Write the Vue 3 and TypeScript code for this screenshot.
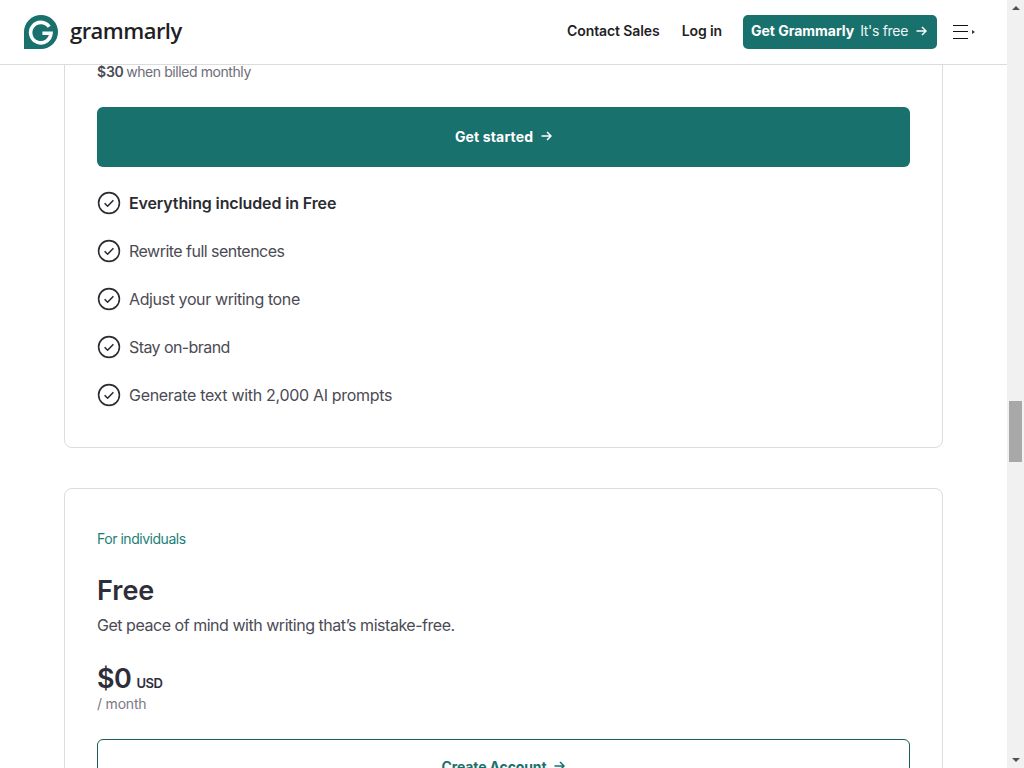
<script setup lang="ts">
const features: { text: string; strong?: boolean; spacing: number }[] = [
  { text: 'Everything included in Free', strong: true, spacing: -0.13 },
  { text: 'Rewrite full sentences', spacing: -0.52 },
  { text: 'Adjust your writing tone', spacing: -0.39 },
  { text: 'Stay on-brand', spacing: -0.58 },
  { text: 'Generate text with 2,000 AI prompts', spacing: -0.31 },
]
</script>

<template>
  <div class="viewport">
    <div class="page">
      <header class="header">
        <div class="brand">
          <svg class="logo" width="34" height="34" viewBox="0 0 34 34">
            <path d="M17 0a17 17 0 0 1 0 34H0V17A17 17 0 0 1 17 0z" fill="#19716e" />
            <path d="M25.2 11.8A10.2 10.2 0 1 0 27 18.2H18.4" fill="none" stroke="#fff" stroke-width="3.6" />
          </svg>
          <span class="wordmark">grammarly</span>
        </div>
        <nav class="nav">
          <a class="link contact">Contact Sales</a>
          <a class="link login">Log in</a>
          <a class="cta">
            <b>Get Grammarly</b>
            <span class="free">It's free</span>
            <svg class="arrow" width="11" height="10" viewBox="0 0 11 10"><path d="M0.5 5H10M6 1l4 4-4 4" fill="none" stroke="currentColor" stroke-width="1.5" /></svg>
          </a>
          <span class="burger">
            <span class="lines"><i></i><i></i><i></i></span>
            <span class="caret"></span>
          </span>
        </nav>
      </header>

      <main class="body">
        <section class="card first">
          <p class="billed"><b>$30</b> when billed monthly</p>
          <a class="btn solid">
            Get started
            <svg width="11" height="10" viewBox="0 0 11 10"><path d="M0.5 5H10M6 1l4 4-4 4" fill="none" stroke="currentColor" stroke-width="1.5" /></svg>
          </a>
          <ul class="features">
            <li v-for="f in features" :key="f.text" :class="{ strong: f.strong }">
              <svg width="24" height="24" viewBox="0 0 24 24">
                <circle cx="12" cy="12" r="10.4" fill="none" stroke="#2b2b33" stroke-width="1.6" />
                <path d="M7.6 12.2l3 3 5.8-6" fill="none" stroke="#2b2b33" stroke-width="1.6" />
              </svg>
              <span :style="{ letterSpacing: f.spacing + 'px' }">{{ f.text }}</span>
            </li>
          </ul>
        </section>

        <section class="card second">
          <p class="eyebrow">For individuals</p>
          <h2 class="plan">Free</h2>
          <p class="desc">Get peace of mind with writing that’s mistake-free.</p>
          <p class="price"><span class="amount">$0</span> <span class="usd">USD</span></p>
          <p class="per">/ month</p>
          <a class="btn outline">
            Create Account
            <svg width="11" height="10" viewBox="0 0 11 10"><path d="M0.5 5H10M6 1l4 4-4 4" fill="none" stroke="currentColor" stroke-width="1.5" /></svg>
          </a>
        </section>
      </main>
    </div>

    <aside class="scrollbar">
      <span class="up"></span>
      <span class="track"><span class="thumb"></span></span>
      <span class="down"></span>
    </aside>
  </div>
</template>

<style scoped>
.viewport {
  display: flex;
  width: 1024px;
  height: 768px;
  overflow: hidden;
  background: #fff;
  font-family: Inter, "Liberation Sans", sans-serif;
  color: #2b2b33;
}
.page {
  flex: 1;
  min-width: 0;
  display: flex;
  flex-direction: column;
}
.header {
  position: relative;
  z-index: 2;
  flex: none;
  height: 65px;
  box-sizing: border-box;
  border-bottom: 1px solid #dcdcdc;
  background: #fff;
  display: flex;
  align-items: center;
  justify-content: space-between;
  padding: 0 32px 0 24px;
}
.brand {
  display: flex;
  align-items: center;
  gap: 12px;
  margin-top: -1px;
}
.logo {
  display: block;
}
.wordmark {
  font-family: "Open Sans", sans-serif;
  font-size: 22px;
  font-weight: 600;
  letter-spacing: -0.55px;
  color: #1f1f26;
  line-height: 34px;
  margin-top: -3px;
}
.nav {
  display: flex;
  align-items: center;
  margin-top: -1px;
}
.link {
  font-size: 14px;
  font-weight: 600;
  letter-spacing: -0.1px;
  color: #1f1f26;
  margin-top: -2px;
}
.contact {
  margin-right: 22px;
}
.login {
  margin-right: 21px;
}
.cta {
  display: flex;
  align-items: center;
  box-sizing: border-box;
  width: 194px;
  height: 34px;
  padding: 0 9px 2px 8px;
  background: #19716e;
  border-radius: 5px;
  color: #fff;
  font-size: 14px;
  letter-spacing: -0.1px;
  white-space: nowrap;
}
.cta b {
  font-weight: 700;
  letter-spacing: -0.02px;
}
.free {
  margin-left: 6px;
  font-weight: 400;
  letter-spacing: -0.3px;
  color: #eef6f5;
}
.arrow {
  margin-left: 8px;
}
.burger {
  display: flex;
  align-items: center;
  margin-left: 16px;
}
.lines {
  display: flex;
  flex-direction: column;
  gap: 5.5px;
  width: 15px;
}
.lines i {
  display: block;
  height: 1px;
  background: #111;
}
.caret {
  margin-left: 4px;
  width: 0;
  height: 0;
  border-left: 3px solid #333;
  border-top: 2.5px solid transparent;
  border-bottom: 2.5px solid transparent;
}
.body {
  flex: 1;
  min-height: 0;
  overflow: hidden;
  padding: 0 64px;
}
.card {
  width: 879px;
  box-sizing: border-box;
  border: 1px solid #dcdcdc;
  border-radius: 8px;
  padding: 0 32px;
}
.first {
  margin-top: -12px;
  height: 395px;
  padding-top: 11px;
}
.second {
  margin-top: 40px;
  height: 400px;
  padding-top: 41px;
}
p, h2, ul {
  margin: 0;
  padding: 0;
}
.billed {
  font-size: 14px;
  line-height: 14px;
  letter-spacing: -0.42px;
  color: #6d6d78;
}
.billed b {
  font-weight: 600;
  letter-spacing: -0.2px;
  margin-right: -1px;
  color: #4b4b55;
}
.btn {
  display: flex;
  align-items: center;
  justify-content: center;
  gap: 8px;
  box-sizing: border-box;
  border-radius: 6px;
  font-size: 14px;
  font-weight: 700;
  letter-spacing: 0.15px;
}
.solid {
  height: 60px;
  margin-top: 28px;
  padding-bottom: 2px;
  background: #19716e;
  color: #fff;
}
.outline {
  height: 56px;
  margin-top: 26px;
  padding-bottom: 2px;
  border: 1px solid #1a5e5c;
  color: #19716e;
  letter-spacing: -0.13px;
}
.features {
  list-style: none;
  margin-top: 12px;
}
.features li {
  display: flex;
  align-items: center;
  gap: 8px;
  height: 48px;
  font-size: 16px;
  color: #4b4b55;
}
.features svg {
  flex: none;
}
.features .strong {
  font-weight: 600;
  color: #2b2b33;
}
.eyebrow {
  font-size: 14px;
  line-height: 18px;
  letter-spacing: -0.47px;
  color: #1a7f78;
}
.plan {
  margin-top: 26px;
  font-size: 27px;
  line-height: 34px;
  font-weight: 600;
  color: #2e2e3a;
}
.desc {
  margin-top: 6px;
  font-size: 16px;
  line-height: 22px;
  letter-spacing: -0.47px;
  color: #4b4b55;
}
.price {
  margin-top: 31px;
  display: flex;
  align-items: baseline;
  gap: 5px;
  line-height: 24px;
  color: #2e2e3a;
}
.amount {
  font-size: 27px;
  font-weight: 600;
  letter-spacing: -0.5px;
}
.usd {
  font-size: 13px;
  font-weight: 600;
  letter-spacing: -0.5px;
}
.per {
  font-size: 14px;
  line-height: 18px;
  letter-spacing: -0.2px;
  color: #7a7a84;
}
.scrollbar {
  flex: none;
  width: 17px;
  height: 768px;
  background: #f1f1f1;
  display: flex;
  flex-direction: column;
  align-items: center;
}
.up, .down {
  flex: none;
  width: 0;
  height: 0;
  border-left: 4px solid transparent;
  border-right: 4px solid transparent;
}
.up {
  margin-top: 6px;
  border-bottom: 4px solid #505050;
}
.down {
  margin-bottom: 6px;
  border-top: 4px solid #505050;
}
.track {
  flex: 1;
  width: 100%;
  display: flex;
  justify-content: center;
  padding-top: 391px;
  box-sizing: border-box;
}
.thumb {
  display: block;
  width: 13px;
  height: 61px;
  background: #a8a8a8;
}
</style>
